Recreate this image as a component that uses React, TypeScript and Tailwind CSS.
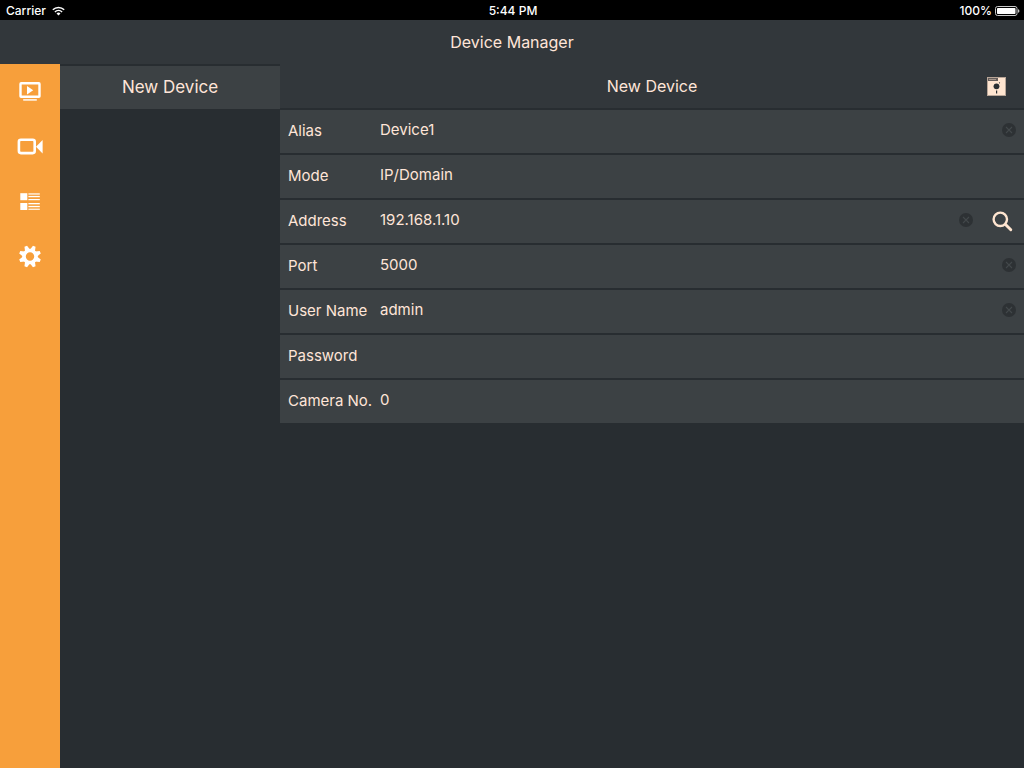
import { useState } from "react";
import type { ReactNode } from "react";

function WifiIcon() {
  return (
    <svg width="13" height="10" viewBox="0 0 13 10" fill="none" stroke="#fff" strokeWidth="1.5" aria-hidden="true">
      <path d="M0.8 3.7a8.2 8.2 0 0 1 11.4 0" />
      <path d="M2.9 6a5.2 5.2 0 0 1 7.2 0" />
      <path d="M6.5 9.6 4.5 7.5a2.9 2.9 0 0 1 4 0z" fill="#fff" stroke="none" />
    </svg>
  );
}

function BatteryIcon() {
  return (
    <svg width="25" height="10" viewBox="0 0 25 10" aria-hidden="true">
      <rect x="0.5" y="0.5" width="21.5" height="9" rx="2" fill="none" stroke="#c8c8c8" />
      <rect x="2" y="2" width="18.5" height="6" rx="0.8" fill="#fff" />
      <path d="M23 3.2c1 .2 1.4.8 1.4 1.8S24 6.6 23 6.8z" fill="#c8c8c8" />
    </svg>
  );
}

function LiveIcon() {
  return (
    <svg width="40" height="40" viewBox="0 0 40 40" fill="#fff" aria-hidden="true">
      <rect x="10.5" y="13.3" width="19" height="13.5" rx="0.6" fill="none" stroke="#fff" strokeWidth="2.4" />
      <path d="M17 16v8.4l6.2-4.2z" />
      <rect x="13.2" y="29" width="13.6" height="1.8" opacity="0.8" />
    </svg>
  );
}

function CameraIcon() {
  return (
    <svg width="40" height="40" viewBox="0 0 40 40" fill="#fff" aria-hidden="true">
      <rect x="8.9" y="14.7" width="15.8" height="13.4" rx="2" fill="none" stroke="#fff" strokeWidth="2.6" />
      <path d="M32.6 15v13.5L26 21.7z" />
    </svg>
  );
}

function ListIcon() {
  return (
    <svg width="40" height="40" viewBox="0 0 40 40" fill="#fff" aria-hidden="true">
      <rect x="10.3" y="13.2" width="7" height="7" />
      <rect x="10.3" y="23" width="7" height="7" />
      <rect x="18.4" y="13.2" width="11.4" height="1.5" opacity="0.8" />
      <rect x="18.4" y="15.9" width="11.4" height="1.3" />
      <rect x="18.4" y="19" width="11.4" height="1.2" />
      <rect x="18.4" y="23" width="11.4" height="1.3" />
      <rect x="18.4" y="25.9" width="11.4" height="1.3" />
      <rect x="18.4" y="28.6" width="11.4" height="1.4" opacity="0.8" />
    </svg>
  );
}

const teeth = [22.5, 67.5, 112.5, 157.5, 202.5, 247.5, 292.5, 337.5];

function GearIcon() {
  return (
    <svg width="40" height="40" viewBox="0 0 40 40" aria-hidden="true">
      <circle cx="20" cy="21.5" r="6" fill="none" stroke="#fff" strokeWidth="3.6" />
      {teeth.map((angle) => (
        <path key={angle} d="M17.4 15 18.6 10.4h2.8L22.6 15z" fill="#fff" transform={`rotate(${angle} 20 21.5)`} />
      ))}
    </svg>
  );
}

function SaveIcon() {
  return (
    <svg width="19" height="19" viewBox="0 0 19 19" aria-hidden="true">
      <rect x="0.5" y="0.5" width="18" height="18" fill="#ffe5d0" stroke="#b9a698" />
      <rect x="1" y="1" width="10" height="3" fill="#665e5b" />
      <rect x="2" y="2" width="7" height="1" fill="#a5968c" />
      <circle cx="9.5" cy="9.3" r="2.9" fill="#2a2f33" />
      <circle cx="12.5" cy="5.8" r="0.6" fill="#2a2f33" />
      <rect x="9" y="13.5" width="1.2" height="3" fill="#2a2f33" />
    </svg>
  );
}

function ClearIcon() {
  return (
    <svg width="14" height="14" viewBox="0 0 14 14" aria-hidden="true">
      <circle cx="7" cy="7" r="7" fill="#2d3134" />
      <path d="m4 4 6 6m0-6-6 6" stroke="#43484b" strokeWidth="1.1" />
    </svg>
  );
}

function SearchIcon() {
  return (
    <svg width="22" height="22" viewBox="0 0 22 22" fill="none" stroke="#ffe5d0" aria-hidden="true">
      <circle cx="9.3" cy="9.3" r="6.7" strokeWidth="2.4" />
      <path d="m14.5 14.5 5.3 5.3" strokeWidth="2.9" strokeLinecap="round" />
    </svg>
  );
}

const navItems: { label: string; icon: ReactNode }[] = [
  { label: "Live view", icon: <LiveIcon /> },
  { label: "Recordings", icon: <CameraIcon /> },
  { label: "Devices", icon: <ListIcon /> },
  { label: "Settings", icon: <GearIcon /> },
];

type Field = { id: string; label: string; type?: string; clearable?: boolean; search?: boolean };

const fields: Field[] = [
  { id: "alias", label: "Alias", clearable: true },
  { id: "mode", label: "Mode" },
  { id: "address", label: "Address", clearable: true, search: true },
  { id: "port", label: "Port", clearable: true },
  { id: "user", label: "User Name", clearable: true },
  { id: "password", label: "Password", type: "password" },
  { id: "camera", label: "Camera No." },
];

export default function App() {
  const [values, setValues] = useState<Record<string, string>>({
    alias: "Device1",
    mode: "IP/Domain",
    address: "192.168.1.10",
    port: "5000",
    user: "admin",
    password: "",
    camera: "0",
  });
  const update = (id: string, value: string) => setValues((v) => ({ ...v, [id]: value }));

  return (
    <div className="flex min-h-screen flex-col bg-[#282d31] font-['Inter',sans-serif] text-base text-[#ffe5d8]">
      <div className="grid h-5 grid-cols-[1fr_auto_1fr] items-center bg-black pl-1.5 pr-1 pt-0.5 text-xs font-medium text-white">
        <div className="flex items-center gap-1.5">
          <span>Carrier</span>
          <WifiIcon />
        </div>
        <div>5:44 PM</div>
        <div className="flex items-center justify-end gap-[3px]">
          <span>100%</span>
          <BatteryIcon />
        </div>
      </div>

      <header className="flex h-11 items-center justify-center bg-[#32373b]">
        <h1>Device Manager</h1>
      </header>

      <div className="flex flex-1">
        <nav className="flex w-15 shrink-0 flex-col items-center gap-[15px] bg-[#f79f3b] pt-1.5">
          {navItems.map((item) => (
            <button key={item.label} type="button" aria-label={item.label}>
              {item.icon}
            </button>
          ))}
        </nav>

        <aside className="w-55 shrink-0 pt-0.5">
          <button type="button" className="h-[43px] w-full bg-[#3c4144] text-[17px]">
            New Device
          </button>
        </aside>

        <main className="min-w-0 flex-1">
          <div className="grid h-11 grid-cols-[1fr_auto_1fr] items-center bg-[#32373b] px-[18px]">
            <h2 className="col-start-2">New Device</h2>
            <button type="button" aria-label="Save" className="justify-self-end">
              <SaveIcon />
            </button>
          </div>
          <form className="flex flex-col gap-0.5 pt-0.5" onSubmit={(e) => e.preventDefault()}>
            {fields.map((f) => (
              <div key={f.id} className="flex h-[43px] items-center bg-[#3c4144] px-2 pb-0.5">
                <label htmlFor={f.id} className="w-[92px] shrink-0 whitespace-nowrap pt-0.5 text-[15px]">
                  {f.label}
                </label>
                <input
                  id={f.id}
                  type={f.type ?? "text"}
                  value={values[f.id]}
                  onChange={(e) => update(f.id, e.target.value)}
                  className="min-w-0 flex-1 bg-transparent text-[15px] outline-none"
                />
                {f.clearable && (
                  <button type="button" aria-label={`Clear ${f.label}`} className="pb-0.5" onClick={() => update(f.id, "")}>
                    <ClearIcon />
                  </button>
                )}
                {f.search && (
                  <button type="button" aria-label="Search network" className="ml-[18px] mr-[3px]">
                    <SearchIcon />
                  </button>
                )}
              </div>
            ))}
          </form>
        </main>
      </div>
    </div>
  );
}
